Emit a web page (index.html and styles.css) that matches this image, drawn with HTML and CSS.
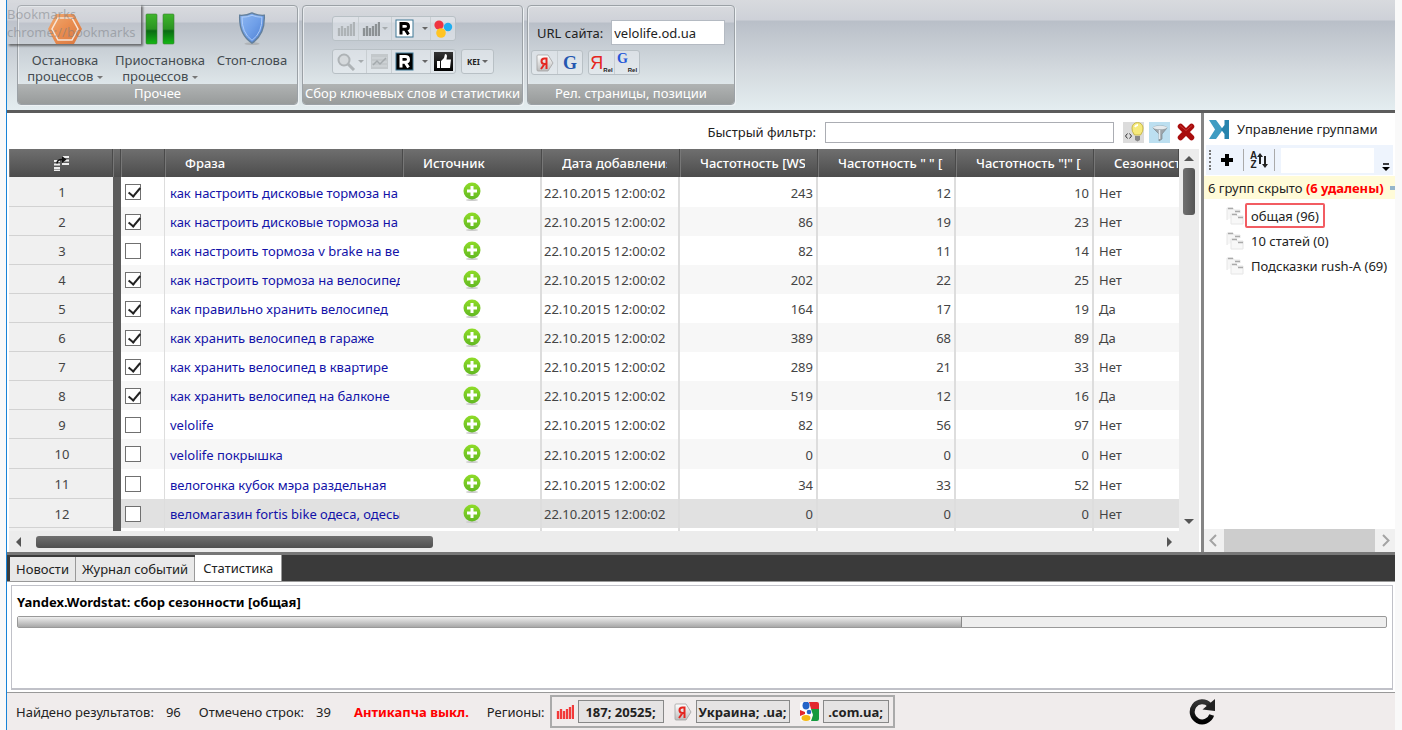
FILE: index.html
```html
<!DOCTYPE html>
<html lang="ru">
<head>
<meta charset="utf-8">
<title>Сбор ключевых слов</title>
<link rel="stylesheet" href="styles.css">
</head>
<body>
<svg class="defs" aria-hidden="true">
  <defs>
    <linearGradient id="gGreen" x1="0" y1="0" x2="0" y2="1"><stop offset="0" stop-color="#8fdc28"/><stop offset="1" stop-color="#62b822"/></linearGradient>
    <linearGradient id="gOrange" x1="0" y1="0" x2="1" y2="1"><stop offset="0" stop-color="#f7a25a"/><stop offset=".5" stop-color="#ee7a2c"/><stop offset="1" stop-color="#d9601a"/></linearGradient>
    <linearGradient id="gPause" x1="0" y1="0" x2="0" y2="1"><stop offset="0" stop-color="#3fb52c"/><stop offset=".5" stop-color="#2a9422"/><stop offset=".56" stop-color="#0b6a14"/><stop offset="1" stop-color="#14b814"/></linearGradient>
    <linearGradient id="gShield" x1="0" y1="0" x2="1" y2="1"><stop offset="0" stop-color="#8fb8f2"/><stop offset=".5" stop-color="#6f9fe8"/><stop offset="1" stop-color="#4a7bd0"/></linearGradient>
    <linearGradient id="gTag" x1="0" y1="0" x2="0" y2="1"><stop offset="0" stop-color="#ffffff"/><stop offset="1" stop-color="#bcbcbc"/></linearGradient>
    <linearGradient id="gDark" x1="0" y1="0" x2="0" y2="1"><stop offset="0" stop-color="#333"/><stop offset="1" stop-color="#000"/></linearGradient>
    <symbol id="plus" viewBox="0 0 20 20"><ellipse cx="10" cy="18" rx="6" ry="1" fill="#ccc"/><circle cx="10" cy="9" r="8.500" fill="url(#gGreen)"/><path d="M10 4v10M5 9h10" stroke="#fff" stroke-width="3"/></symbol>
    <symbol id="bars" viewBox="0 0 18 16"><path d="M2 7v8M5 5v10M8 7v8M11 5v10M14 3v12M17 1v14" stroke="currentColor" stroke-width="2.300"/></symbol>
    <symbol id="yandex" viewBox="0 0 18 18"><path d="M2 1h10l5 8-5 8H2q-1 0-1-1V2q0-1 1-1z" fill="url(#gTag)" stroke="#a2a2a2" stroke-width=".8"/><path d="M10.500 3.500v11.500M10.500 4.500H8.500q-3 0-3 2.700t3 2.700h2M8.500 10L5 15" fill="none" stroke="#e52620" stroke-width="2"/></symbol>
    <symbol id="folder" viewBox="0 0 18 18"><path d="M1 13V1h6l1 2h6v3" fill="#f6f6f6" stroke="#e6e6e6"/><path d="M5 17V7h5l1 2h6v8z" fill="#f8f8f8" stroke="#e6e6e6"/><path d="M2 1.500h5M9 4.500h5M6 7.500h5M12 10.500h5" stroke="#aaa" stroke-width="1.500"/></symbol>
  </defs>
</svg>

<div class="app">
  <header class="ribbon">
    <section class="group group-misc">
      <div class="group-body big-row">
        <button class="big b1"><svg width="36" height="32" viewBox="0 0 36 32"><path d="M9 1h18l8 15-8 15H9L1 16z" fill="url(#gOrange)"/><path d="M11 5h14l6 11-6 11H11L5 16z" fill="none" stroke="#ffe9d6" stroke-width="1.500"/></svg><span>Остановка<br>процессов <i class="caret"></i></span></button>
        <button class="big b2"><svg width="30" height="32" viewBox="0 0 30 32"><g stroke="#3a7d34" stroke-width=".6"><rect x="1" y="1" width="11" height="30" rx="1" fill="url(#gPause)"/><rect x="18" y="1" width="11" height="30" rx="1" fill="url(#gPause)"/></g></svg><span>Приостановка<br>процессов <i class="caret"></i></span></button>
        <button class="big b3"><svg width="30" height="36" viewBox="0 0 30 36"><ellipse cx="15" cy="33.500" rx="8" ry="1.500" fill="#999" opacity=".5"/><path d="M15 1q6 3 13 2.500Q29 24 15 33 1 24 2 3.500 9 4 15 1z" fill="url(#gShield)" stroke="#64809c" stroke-width="1.500"/><path d="M15 3.500q5 2 10.500 2Q26 22 15 30 4 22 4.500 5.500q5.500 0 10.500-2z" fill="none" stroke="#b3cff8"/></svg><span>Стоп-слова</span></button>
      </div>
      <h2>Прочее</h2>
    </section>
    <section class="group group-collect">
      <div class="group-body tools">
        <div class="tool-row">
          <div class="toolbar">
            <button class="w25 faint" aria-label="Wordstat"><svg width="18" height="16"><use href="#bars"/></svg></button>
            <button class="w34 gray" aria-label="Частотность"><svg width="18" height="16"><use href="#bars"/></svg><i class="caret"></i></button>
            <button class="w40" aria-label="Rambler"><svg width="19" height="19" viewBox="0 0 19 19"><rect x="1" y="1" width="17" height="17" fill="#fff" stroke="#3e7896"/><path d="M6 15.500V4.500H10q3.500 0 3.500 2.900T10 10.300H6M10 10l3.500 5.500" fill="none" stroke="#000" stroke-width="3"/></svg><i class="caret dark"></i></button>
            <button class="w25" aria-label="Источники"><svg width="20" height="18" viewBox="0 0 20 18"><circle cx="6" cy="5" r="4.600" fill="#ef3340"/><circle cx="15" cy="7" r="4.200" fill="#20aef0"/><circle cx="8" cy="13" r="4.800" fill="#ffc422"/></svg></button>
          </div>
        </div>
        <div class="tool-row">
          <div class="toolbar">
            <button class="w34 faint" aria-label="Поиск"><svg width="20" height="18" viewBox="0 0 20 18"><circle cx="8" cy="7" r="5.500" fill="#d5d9dc" stroke="currentColor" stroke-width="2"/><path d="M12 11l6 6" stroke="currentColor" stroke-width="3"/></svg><i class="caret"></i></button>
            <button class="w25 faint" aria-label="Сезонность"><svg width="17" height="15" viewBox="0 0 17 15"><rect width="17" height="15" fill="#c3c8cb"/><path d="M1 4h15M1 8h15M1 12h15" stroke="#d5dadd"/><path d="M2 11l4-4 3 3 6-6" fill="none" stroke="#a4aaad" stroke-width="1.500"/></svg></button>
            <button class="w40" aria-label="Рамблер"><svg width="19" height="19" viewBox="0 0 19 19"><rect x="1" y="1" width="17" height="17" fill="#000" stroke="#3e7896"/><path d="M6 15.500V4.500H10q3.500 0 3.500 2.900T10 10.300H6M10 10l3.500 5.500" fill="none" stroke="#fff" stroke-width="3"/></svg><i class="caret dark"></i></button>
            <button class="w25" aria-label="Нравится"><svg width="19" height="19" viewBox="0 0 19 19"><rect width="19" height="19" fill="url(#gDark)"/><path d="M3 9h3v7H3zM7 9l3-3 1-4q2 0 2 2l-.5 3.500H17L16 16H7z" fill="#fff"/></svg></button>
          </div>
          <div class="toolbar"><button class="kei">KEI <i class="caret dark"></i></button></div>
        </div>
      </div>
      <h2>Сбор ключевых слов и статистики</h2>
    </section>
    <section class="group group-url">
      <div class="group-body url-body">
        <div class="url-row"><label for="url">URL сайта:</label><input id="url" type="text" value="velolife.od.ua"></div>
        <div class="tool-row">
          <div class="toolbar">
            <button class="w25" aria-label="Яндекс"><svg width="18" height="18"><use href="#yandex"/></svg></button>
            <button class="w25 google">G</button>
          </div>
          <div class="toolbar">
            <button class="w25 rel-ya"><b>Я</b><small>Rel</small></button>
            <button class="w25 rel-go"><b>G</b><small>Rel</small></button>
          </div>
        </div>
      </div>
      <h2>Рел. страницы, позиции</h2>
    </section>
    <div class="tooltip">Bookmarks<br>chrome://bookmarks</div>
  </header>

  <div class="middle">
    <main class="data">
      <div class="filter">
        <label for="quick">Быстрый фильтр:</label><input id="quick" type="text">
        <button class="f-bulb" aria-label="Подсказка"><svg width="20" height="20" viewBox="0 0 20 20"><path d="M10.500 13q-3-4-2.500-7a5.500 5.500 0 0 1 11 0q.5 3-2.500 7z" fill="#f6ea7b" stroke="#c9b94c"/><path d="M11 5q1-2 3-2" stroke="#fff" stroke-width="2" fill="none"/><path d="M11 14h5v4l-2.500 1.500L11 18z" fill="#888"/><path d="M3.500 11.500L1.500 14l2 2.500M5.500 11.500l2 2.500-2 2.500" fill="none" stroke="#333"/></svg></button>
        <button class="f-funnel" aria-label="Фильтр"><svg width="20" height="20" viewBox="0 0 20 20"><path d="M3 6q0-2 7-2t7 2l-5 6v5l-3 2v-7z" fill="#9da5aa" stroke="#7d868c" stroke-width=".7"/><ellipse cx="10" cy="5.500" rx="7" ry="1.800" fill="#e5eaed"/><path d="M9.500 8v9" stroke="#e5eaed" stroke-width="1.500"/></svg></button>
        <button class="f-clear" aria-label="Очистить"><svg width="18" height="18" viewBox="0 0 18 18"><path d="M3.500 3.500l11 11M14.500 3.500l-11 11" stroke="#a80d0d" stroke-width="5.500" stroke-linecap="round"/><path d="M3 2.500l6 5 6-5" stroke="#c93636" fill="none"/></svg></button>
      </div>
      <div class="grid-area">
        <div class="table-clip">
          <table>
            <colgroup><col class="c-num"><col class="c-bar"><col class="c-check"><col><col class="c-src"><col class="c-val"><col class="c-val"><col class="c-val"><col class="c-val"><col class="c-season"></colgroup>
            <thead><tr>
              <th class="first"><svg width="16" height="16" viewBox="0 0 16 16"><path d="M1 6h6M1 9.500h6M1 13h6M1 15.500h6M9 2h7M9 5.500h7M9 9h7" stroke="#eee" stroke-width="2"/><path d="M4 8.500q0-4 5-4" fill="none" stroke="#111" stroke-width="1.500"/><path d="M9 1l4.500 3.500L9 8z" fill="#111"/></svg></th>
              <th></th><th></th><th><span>Фраза</span></th><th><span>Источник</span></th><th><span>Дата добавления</span></th><th><span>Частотность [WS</span></th><th><span>Частотность " " ['</span></th><th><span>Частотность "!" ['</span></th><th class="last"><span>Сезонност</span></th>
            </tr></thead>
            <tbody>
              <tr class="tall"><td class="num">1</td><td class="bar"></td><td class="check"><input type="checkbox" aria-label="1" checked></td><td class="phrase">как настроить дисковые тормоза на</td><td class="src"><svg width="20" height="20"><use href="#plus"/></svg></td><td class="date">22.10.2015 12:00:02</td><td class="n">243</td><td class="n">12</td><td class="n">10</td><td>Нет</td></tr>
              <tr><td class="num">2</td><td class="bar"></td><td class="check"><input type="checkbox" aria-label="2" checked></td><td class="phrase">как настроить дисковые тормоза на</td><td class="src"><svg width="20" height="20"><use href="#plus"/></svg></td><td class="date">22.10.2015 12:00:02</td><td class="n">86</td><td class="n">19</td><td class="n">23</td><td>Нет</td></tr>
              <tr><td class="num">3</td><td class="bar"></td><td class="check"><input type="checkbox" aria-label="3"></td><td class="phrase">как настроить тормоза v brake на ве</td><td class="src"><svg width="20" height="20"><use href="#plus"/></svg></td><td class="date">22.10.2015 12:00:02</td><td class="n">82</td><td class="n">11</td><td class="n">14</td><td>Нет</td></tr>
              <tr><td class="num">4</td><td class="bar"></td><td class="check"><input type="checkbox" aria-label="4" checked></td><td class="phrase">как настроить тормоза на велосипед</td><td class="src"><svg width="20" height="20"><use href="#plus"/></svg></td><td class="date">22.10.2015 12:00:02</td><td class="n">202</td><td class="n">22</td><td class="n">25</td><td>Нет</td></tr>
              <tr><td class="num">5</td><td class="bar"></td><td class="check"><input type="checkbox" aria-label="5" checked></td><td class="phrase">как правильно хранить велосипед</td><td class="src"><svg width="20" height="20"><use href="#plus"/></svg></td><td class="date">22.10.2015 12:00:02</td><td class="n">164</td><td class="n">17</td><td class="n">19</td><td>Да</td></tr>
              <tr><td class="num">6</td><td class="bar"></td><td class="check"><input type="checkbox" aria-label="6" checked></td><td class="phrase">как хранить велосипед в гараже</td><td class="src"><svg width="20" height="20"><use href="#plus"/></svg></td><td class="date">22.10.2015 12:00:02</td><td class="n">389</td><td class="n">68</td><td class="n">89</td><td>Да</td></tr>
              <tr><td class="num">7</td><td class="bar"></td><td class="check"><input type="checkbox" aria-label="7" checked></td><td class="phrase">как хранить велосипед в квартире</td><td class="src"><svg width="20" height="20"><use href="#plus"/></svg></td><td class="date">22.10.2015 12:00:02</td><td class="n">289</td><td class="n">21</td><td class="n">33</td><td>Нет</td></tr>
              <tr><td class="num">8</td><td class="bar"></td><td class="check"><input type="checkbox" aria-label="8" checked></td><td class="phrase">как хранить велосипед на балконе</td><td class="src"><svg width="20" height="20"><use href="#plus"/></svg></td><td class="date">22.10.2015 12:00:02</td><td class="n">519</td><td class="n">12</td><td class="n">16</td><td>Да</td></tr>
              <tr><td class="num">9</td><td class="bar"></td><td class="check"><input type="checkbox" aria-label="9"></td><td class="phrase">velolife</td><td class="src"><svg width="20" height="20"><use href="#plus"/></svg></td><td class="date">22.10.2015 12:00:02</td><td class="n">82</td><td class="n">56</td><td class="n">97</td><td>Нет</td></tr>
              <tr class="tall"><td class="num">10</td><td class="bar"></td><td class="check"><input type="checkbox" aria-label="10"></td><td class="phrase">velolife покрышка</td><td class="src"><svg width="20" height="20"><use href="#plus"/></svg></td><td class="date">22.10.2015 12:00:02</td><td class="n">0</td><td class="n">0</td><td class="n">0</td><td>Нет</td></tr>
              <tr class="tall"><td class="num">11</td><td class="bar"></td><td class="check"><input type="checkbox" aria-label="11"></td><td class="phrase">велогонка кубок мэра раздельная</td><td class="src"><svg width="20" height="20"><use href="#plus"/></svg></td><td class="date">22.10.2015 12:00:02</td><td class="n">34</td><td class="n">33</td><td class="n">52</td><td>Нет</td></tr>
              <tr class="current"><td class="num">12</td><td class="bar"></td><td class="check"><input type="checkbox" aria-label="12"></td><td class="phrase">веломагазин fortis bike одеса, одесы</td><td class="src"><svg width="20" height="20"><use href="#plus"/></svg></td><td class="date">22.10.2015 12:00:02</td><td class="n">0</td><td class="n">0</td><td class="n">0</td><td>Нет</td></tr>
              <tr class="next"><td class="num"></td><td class="bar"></td><td class="check"></td><td class="phrase"></td><td class="src"></td><td class="date"></td><td class="n"></td><td class="n"></td><td class="n"></td><td></td></tr>
            </tbody>
          </table>
        </div>
        <div class="vscroll"><i class="up"></i><div class="thumb"></div><i class="down"></i></div>
      </div>
      <div class="hscroll"><i class="left"></i><div class="thumb"></div><i class="right"></i></div>
    </main>

    <aside class="groups">
      <h3><svg width="21" height="19" viewBox="0 0 21 19"><path d="M0 0h7l7 9.500L7 19H0l6-9.500z" fill="#3f9cc2"/><path d="M20 0v19h-4.500v-5L12 9.500 15.500 5V0z" fill="#2784ad"/></svg>Управление группами</h3>
      <div class="gtools">
        <i class="grip"></i>
        <button class="add" aria-label="Добавить"><svg width="14" height="14" viewBox="0 0 14 14"><path d="M7 1v12M1 7h12" stroke="#000" stroke-width="4"/></svg></button>
        <button class="sort" aria-label="Сортировка"><span>A<br>Z</span><svg width="11" height="17" viewBox="0 0 11 17"><path d="M3 12V3M8 4v10" stroke="#222" stroke-width="2"/><path d="M0 5l3-4 3 4zM5 12l3 4 3-4z" fill="#222"/></svg></button>
        <input type="text" aria-label="Поиск группы">
        <button class="more" aria-label="Ещё"><svg width="8" height="8" viewBox="0 0 8 8"><path d="M1 1h6" stroke="#000" stroke-width="1.500"/><path d="M0 4h8L4 8z" fill="#000"/></svg></button>
      </div>
      <div class="hidden-note"><span>6 групп скрыто <b>(6 удалены)</b></span><i></i></div>
      <ul>
        <li><svg width="18" height="18"><use href="#folder"/></svg><span class="marked">общая (96)</span></li>
        <li><svg width="18" height="18"><use href="#folder"/></svg><span>10 статей (0)</span></li>
        <li><svg width="18" height="18"><use href="#folder"/></svg><span>Подсказки rush-A (69)</span></li>
      </ul>
      <div class="gscroll"><svg width="8" height="13" viewBox="0 0 8 13"><path d="M7 1L1.500 6.500 7 12" fill="none" stroke="#a3a3a3" stroke-width="2"/></svg><div class="thumb"></div><svg width="8" height="13" viewBox="0 0 8 13"><path d="M1 1l5.500 5.500L1 12" fill="none" stroke="#a3a3a3" stroke-width="2"/></svg></div>
    </aside>
  </div>

  <nav class="tabs"><button>Новости</button><button>Журнал событий</button><button class="active">Статистика</button></nav>
  <section class="stats">
    <div class="stats-box">
      <h3 id="task">Yandex.Wordstat: сбор сезонности [общая]</h3>
      <div class="progress" role="progressbar" aria-labelledby="task" aria-valuenow="69"><div style="width:69%"></div></div>
    </div>
  </section>
  <footer class="status">
    <span class="found">Найдено результатов:<em>96</em></span>
    <span class="picked">Отмечено строк:<em>39</em></span>
    <strong>Антикапча выкл.</strong>
    <span class="reg-label">Регионы:</span>
    <div class="regions">
      <svg class="red" width="18" height="16"><use href="#bars"/></svg><button class="r1">187; 20525;</button>
      <svg width="18" height="18"><use href="#yandex"/></svg><button class="r2">Украина; .ua;</button>
      <svg width="19" height="19" viewBox="0 0 19 19"><rect width="19" height="19" rx="2" fill="#fff"/><path d="M9 0h8q2 0 2 2v5h-8z" fill="#e3262e"/><path d="M11 7h8v10q0 2-2 2h-6l2-6z" fill="#159a3e"/><path d="M0 8l5 2v2l-5 2z" fill="#e3262e"/><ellipse cx="6" cy="3.500" rx="3.500" ry="4" fill="#2464c8"/><circle cx="9" cy="10" r="2.300" fill="#2464c8"/><ellipse cx="6" cy="16" rx="4.500" ry="3" fill="#f5b914"/></svg><button class="r3">.com.ua;</button>
    </div>
    <button class="refresh" aria-label="Обновить"><svg width="27" height="26" viewBox="0 0 27 26"><path d="M20.500 6A10 10 0 1 0 22.700 16" fill="none" stroke="url(#gDark)" stroke-width="5"/><path d="M26 0v12L13.500 10.500z" fill="#222"/></svg></button>
  </footer>
</div>
</body>
</html>
```

FILE: styles.css
```css
* { box-sizing: border-box; }
body {
  margin: 0;
  background: #f9f9f9;
  font: 13px/18px "Noto Sans", "Open Sans", sans-serif;
  color: #222;
}
button, input { font: inherit; color: inherit; margin: 0; }
button { border: 0; padding: 0; background: none; }
h2, h3, ul { margin: 0; padding: 0; font-size: 13px; font-weight: normal; }
svg { display: block; flex: none; }
.defs { position: absolute; width: 0; height: 0; }

.app {
  display: flex;
  flex-direction: column;
  height: 100vh;
  margin: 0 7px 0 6px;
  border-left: 1px solid #1883d7;
  background: #fff;
  overflow: hidden;
}

/* ribbon */
.ribbon {
  position: relative;
  display: flex;
  gap: 4px;
  flex: none;
  padding: 5px 10px;
  border-bottom: 3px solid #5c5c5c;
  background: linear-gradient(#d8dade 0, #ced1d8 20px, #b9bfc8 21px, #d3d9de 70px, #e4edf0 110px);
}
.group {
  display: flex;
  flex-direction: column;
  height: 100px;
  border: 1px solid #9ba1a6;
  border-radius: 4px;
  box-shadow: inset 1px 1px #e8ebee, 1px 1px #eef2f4;
  overflow: hidden;
  background: linear-gradient(#d8dade 0, #ced1d8 16px, #b9bfc8 17px, #dfe7ea 80px);
}
.group-misc { width: 281px; }
.group-collect { width: 221px; }
.group-url { width: 208px; }
.group-body { flex: 1; }
.group h2 {
  height: 20px;
  line-height: 19px;
  text-align: center;
  color: #fff;
  background: linear-gradient(#b0b3b3, #989b9b);
  white-space: nowrap;
}
.big-row { display: flex; padding: 6px 1px 0; }
.big {
  display: flex;
  flex-direction: column;
  align-items: center;
  line-height: 16px;
  color: #444b50;
}
.b1 { width: 92px; }
.b2 { width: 98px; }
.b3 { width: 86px; }
.big svg { height: 34px; margin-bottom: 6px; }
.big span { white-space: nowrap; }
.caret {
  display: inline-block;
  border: 3px solid transparent;
  border-top-color: #777;
  border-bottom: 0;
  vertical-align: middle;
}
.faint .caret, .gray .caret { border-top-color: #a6abae; }
.caret.dark { border-top-color: #666; }
.tools { padding: 10px 0 0 29px; }
.tool-row { display: flex; gap: 5px; }
.tools .tool-row + .tool-row { margin-top: 8px; }
.toolbar {
  display: flex;
  height: 25px;
  border: 1px solid #b8c0c5;
  border-radius: 3px;
  background: rgba(235, 240, 243, .5);
}
.toolbar button {
  display: flex;
  align-items: center;
  justify-content: center;
  gap: 2px;
}
.toolbar button + button { border-left: 1px solid #c8ced2; }
.w25 { width: 25px; }
.w34 { width: 33px; }
.toolbar .w40 { width: 39px; gap: 8px; }
.faint { color: #aeb3b6; }
.gray { color: #8c9194; }
.toolbar .kei { width: 31px; font-size: 8px; font-weight: bold; }
.url-body { padding: 14px 9px 0 3px; }
.url-row { display: flex; align-items: center; gap: 8px; padding-left: 6px; }
.url-row label { white-space: nowrap; }
.url-row input {
  flex: 1;
  min-width: 0;
  height: 25px;
  border: 1px solid #b4bac2;
  padding: 1px 2px 0;
  background: #fff;
}
.url-body .tool-row { margin-top: 5px; }
.google { font: bold 18px/20px "Liberation Serif", serif; color: #2456b0; }
.rel-ya b { color: #e52620; font: 18px/22px "Liberation Sans", sans-serif; }
.rel-go b { color: #2456d8; font: bold 14px/16px "Liberation Serif", serif; align-self: flex-start; }
.toolbar .rel-ya, .toolbar .rel-go { gap: 0; }
.rel-ya small, .rel-go small { font: bold 6px/8px "Liberation Sans", sans-serif; align-self: flex-end; }
.tooltip {
  position: absolute;
  left: 0;
  top: 4px;
  width: 134px;
  height: 40px;
  overflow: hidden;
  line-height: 18px;
  padding-top: 1px;
  color: rgba(120, 124, 130, .5);
  background: rgba(215, 216, 220, .2);
  box-shadow: 2px 2px 2px rgba(70, 70, 70, .7);
}

/* middle area */
.middle { display: flex; flex: 1; min-height: 0; border-bottom: 3px solid #777; }
.data { display: flex; flex-direction: column; flex: 1; min-width: 0; padding: 0 2px; border-right: 3px solid #858585; }
.filter { display: flex; align-items: center; flex: none; gap: 9px; height: 36px; padding: 2px 3px 0 0; justify-content: flex-end; }
.filter input { width: 289px; height: 21px; border: 1px solid #abadb3; }
.filter button { display: grid; place-items: center; width: 21px; height: 21px; }
.filter button + button { margin-left: -4px; }
.f-bulb { background: #dcdcdc; }
.f-funnel { background: #bcdff0; }
.grid-area { display: flex; flex: 1; min-height: 0; }
.table-clip { flex: 1; min-width: 0; overflow: hidden; }
table { width: 100%; border-collapse: separate; border-spacing: 0; table-layout: fixed; }
.c-num { width: 104px; }
.c-bar { width: 8px; }
.c-check { width: 44px; }
.c-src { width: 139px; }
.c-val { width: 138px; }
.c-season { width: 85px; }
th {
  height: 28px;
  padding: 0 12px 0 19px;
  border-right: 1px solid #4a4a4a;
  border-left: 1px solid #777;
  background: linear-gradient(#6f6f6f, #4c4c4c);
  color: #fff;
  font-weight: 500;
  text-align: left;
}
th span { display: block; overflow: hidden; white-space: nowrap; }
th.first { padding: 0; }
th.first svg { margin: 0 auto; }
th.last { padding-right: 0; }
th:nth-child(2), th:nth-child(3) { padding: 0; }
td {
  height: 29px;
  padding: 1px 3px 0 5px;
  overflow: hidden;
  white-space: nowrap;
  color: #444;
  border-right: 2px solid #ddd;
}
.tall td { height: 30px; }
tbody tr:nth-child(even) td { background: #f7f7f7; }
tbody tr.current td { background: #e1e1e1; }
tbody td:last-child { border-right: 0; }
tbody tr td.num { text-align: center; background: #f0f0f0; border-right: 0; border-bottom: 1px solid #d2d2d2; }
tbody tr td.bar { background: #5c5c5c; border: 0; padding: 0; }
td.check { padding: 0 0 0 4px; border-right-width: 1px; }
.check input {
  appearance: none;
  display: block;
  width: 16px;
  height: 16px;
  border: 1px solid #707070;
  background: #fff;
}
.check input:checked::after {
  content: "";
  display: block;
  width: 5px;
  height: 10px;
  margin: 0 0 0 5px;
  border: solid #222;
  border-width: 0 2px 2px 0;
  transform: rotate(40deg);
}
td.phrase { color: #1212a8; border-right: 3px solid transparent; padding-right: 0; }
td.src { padding: 0; }
td.date { padding-left: 2px; }
.src svg { margin: 0 auto; }
td.n { text-align: right; }
.vscroll { display: flex; flex-direction: column; align-items: center; width: 20px; padding: 7px 0; background: #ececec; }
.vscroll .thumb { width: 12px; height: 47px; margin-top: 7px; border-radius: 3px; background: linear-gradient(90deg, #707070, #555); }
.up, .down { border: 5px solid transparent; }
.up { border-bottom-color: #555; border-top: 0; }
.down { border-top-color: #555; border-bottom: 0; margin-top: auto; }
.hscroll { display: flex; align-items: center; flex: none; height: 21px; padding: 0 27px 0 7px; background: #ececec; }
.hscroll .thumb { width: 397px; height: 12px; margin-left: 15px; border-radius: 3px; background: linear-gradient(#707070, #505050); }
.left, .right { border: 5px solid transparent; }
.left { border-right-color: #555; border-left: 0; }
.right { border-left-color: #555; border-right: 0; margin-left: auto; }

/* group panel */
.groups { display: flex; flex-direction: column; width: 191px; flex: none; overflow: hidden; }
.groups h3 { display: flex; align-items: center; gap: 7px; height: 32px; padding: 0 5px; white-space: nowrap; }
.gtools { display: flex; align-items: center; height: 30px; margin: 0 2px; padding: 0 3px; background: #eef4fd; }
.grip { height: 20px; border-left: 2px dotted #777; }
.add { margin: 0 9px; }
.sort { display: flex; align-items: center; height: 22px; padding: 0 6px; border: solid #aaa; border-width: 0 1px; }
.sort span { font: bold 10px/9px "Liberation Sans", sans-serif; }
.gtools input { width: 93px; min-width: 0; height: 25px; margin-left: 6px; border: 0; background: #fff; }
.more { margin: 14px 0 0 auto; }
.hidden-note { display: flex; align-items: center; justify-content: space-between; height: 23px; margin-top: 1px; padding-left: 4px; background: #fffbd8; white-space: nowrap; }
.hidden-note b { color: #f00; }
.hidden-note i { width: 5px; height: 4px; background: #95b5ca; }
.groups ul { list-style: none; flex: 1; padding: 4px 0 0 22px; }
.groups li { display: flex; align-items: center; gap: 2px; height: 25px; white-space: nowrap; }
.groups li span { padding: 2px 4px 0; border: 2px solid transparent; line-height: 19px; margin-left: -1px; }
.groups li .marked { border-color: #f25c62; border-radius: 2px; }
.gscroll { display: flex; align-items: center; height: 23px; padding: 0 5px; gap: 7px; background: #f0f0f0; }
.gscroll .thumb { flex: 1; height: 23px; background: #cdcdcd; }

/* lower pane */
.tabs { display: flex; align-items: flex-end; flex: none; height: 27px; padding-left: 3px; background: #3a3a3a; border-bottom: 1px solid #999; }
.tabs button { height: 24px; padding: 0 6px; border-right: 1px solid #999; background: #e9e9e9; white-space: nowrap; }
.tabs .active { height: 26px; padding: 0 8px; background: #fff; }
.stats { flex: none; padding: 3px 2px 2px 4px; border-bottom: 1px solid #999; }
.stats-box { height: 105px; padding: 7px 5px 0; border: 1px solid #c0c1c8; border-bottom-width: 2px; }
.stats-box h3 { font-weight: bold; color: #000; }
.progress { height: 12px; margin-top: 5px; border: 1px solid #999; border-radius: 2px; background: #eee; }
.progress div { height: 10px; border-right: 1px solid #888; background: linear-gradient(#eee, #a8a8a8); }
.status { display: flex; align-items: center; flex: none; height: 37px; padding: 0 179px 0 9px; background: #f0ecec; white-space: nowrap; }
.status em { font-style: normal; margin-left: 12px; }
.picked { margin-left: 18px; }
.status strong { margin-left: 23px; color: #f00; }
.reg-label { margin: 0 5px 0 18px; }
.regions { display: flex; align-items: center; height: 33px; padding: 0 4px; border: 2px solid #aaa; font-weight: bold; }
.regions .red { color: #f23a3a; }
.regions button { height: 23px; margin-left: 4px; border: 1px solid #888; background: #e5e3e3; }
.regions button + svg { margin-left: 10px; }
.r1 { width: 86px; }
.r2 { width: 94px; }
.r3 { width: 66px; }
.refresh { margin-left: auto; }
```
